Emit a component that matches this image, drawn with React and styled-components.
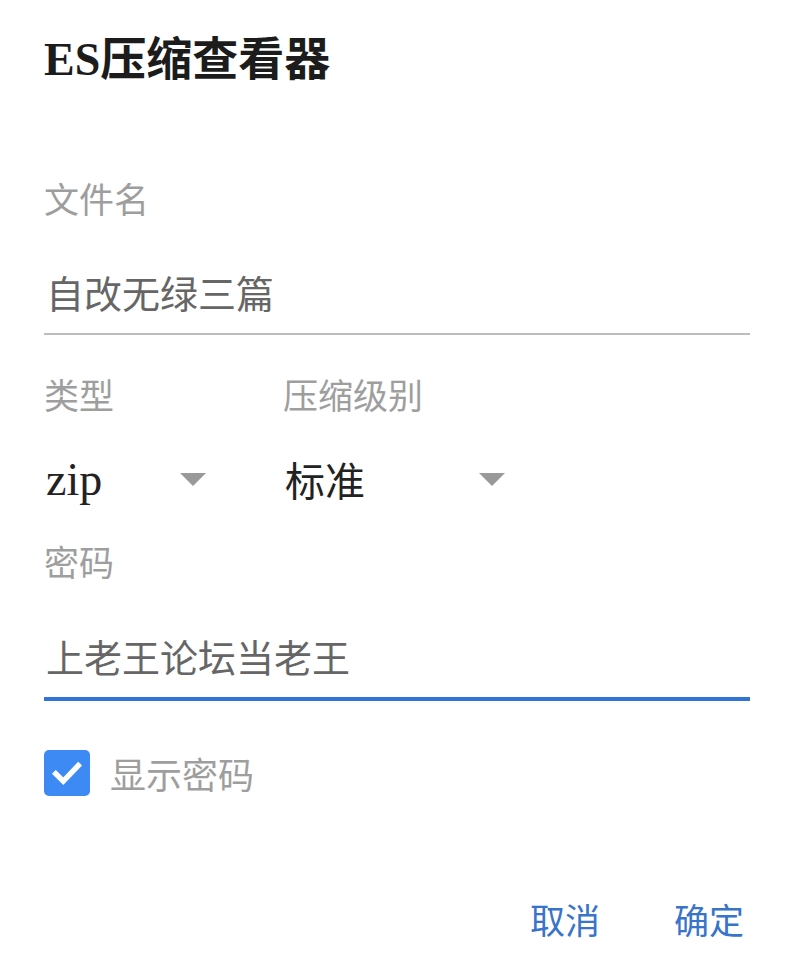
import styled, { createGlobalStyle } from 'styled-components'

const GlobalStyle = createGlobalStyle`
  body {
    margin: 0;
    background: #ffffff;
    font-family: 'Liberation Serif', 'Noto Sans CJK SC', serif;
  }
`

const Dialog = styled.div`
  width: 800px;
  height: 970px;
  box-sizing: border-box;
  padding: 28px 50px 0 44px;
  display: flex;
  flex-direction: column;
`

const Title = styled.h1`
  margin: 0;
  font-size: 46px;
  line-height: 64px;
  font-weight: 700;
  color: #1c1c1c;
`

const Label = styled.div`
  font-family: 'Noto Sans CJK SC', sans-serif;
  font-size: 35px;
  line-height: 40px;
  color: #9e9e9e;
  margin-top: ${(p) => p.$top || 0}px;
`

const TextField = styled.div`
  font-family: 'Noto Sans CJK SC', sans-serif;
  font-size: 38px;
  line-height: 44px;
  color: #666666;
  padding: 0 0 19px 2px;
  margin-top: ${(p) => p.$top || 0}px;
  border-bottom: ${(p) => (p.$focused ? '4px solid #2f74d6' : '2px solid #bdbdbd')};
`

const SelectRow = styled.div`
  display: flex;
  margin-top: 39px;
`

const SelectCol = styled.div`
  display: flex;
  flex-direction: column;
  width: ${(p) => p.$width}px;
`

const Select = styled.div`
  display: flex;
  align-items: center;
  justify-content: space-between;
  width: ${(p) => p.$width}px;
  margin-top: 40px;
  height: 50px;
`

const SelectValue = styled.span`
  font-size: ${(p) => (p.$latin ? 46 : 40)}px;
  color: #222222;
  padding-left: 2px;
`

const Arrow = styled.span`
  width: 0;
  height: 0;
  border-left: 13px solid transparent;
  border-right: 13px solid transparent;
  border-top: 13px solid #999999;
`

const CheckRow = styled.label`
  display: flex;
  align-items: center;
  gap: 20px;
  margin-top: 46px;
`

const Box = styled.span`
  width: 46px;
  height: 46px;
  border-radius: 5px;
  background: #3d8af5;
  display: flex;
  align-items: center;
  justify-content: center;
`

const CheckText = styled.span`
  font-family: 'Noto Sans CJK SC', sans-serif;
  font-size: 36px;
  color: #9e9e9e;
`

const Actions = styled.div`
  display: flex;
  justify-content: flex-end;
  gap: 74px;
  margin-top: auto;
  margin-bottom: 26px;
  padding-right: 6px;
`

const Action = styled.button`
  border: none;
  background: none;
  padding: 0;
  font-family: 'Noto Sans CJK SC', sans-serif;
  font-size: 35px;
  color: #3874c9;
  cursor: pointer;
`

const App = () => {
  return (
    <>
      <GlobalStyle />
      <Dialog>
        <Title>ES压缩查看器</Title>

        <Label $top={86}>文件名</Label>
        <TextField $top={52}>自改无绿三篇</TextField>

        <SelectRow>
          <SelectCol $width={239}>
            <Label>类型</Label>
            <Select $width={162}>
              <SelectValue $latin>zip</SelectValue>
              <Arrow />
            </Select>
          </SelectCol>
          <SelectCol $width={260}>
            <Label>压缩级别</Label>
            <Select $width={222}>
              <SelectValue>标准</SelectValue>
              <Arrow />
            </Select>
          </SelectCol>
        </SelectRow>

        <Label $top={37}>密码</Label>
        <TextField $top={53} $focused>上老王论坛当老王</TextField>

        <CheckRow>
          <Box>
            <svg width='36' height='36' viewBox='0 0 24 24' fill='none' stroke='#ffffff' strokeWidth='3.6' strokeLinecap='square' strokeLinejoin='miter'>
              <polyline points='4.5 12.5 9.5 17.5 19.5 7' />
            </svg>
          </Box>
          <CheckText>显示密码</CheckText>
        </CheckRow>

        <Actions>
          <Action>取消</Action>
          <Action>确定</Action>
        </Actions>
      </Dialog>
    </>
  )
}

export default App
